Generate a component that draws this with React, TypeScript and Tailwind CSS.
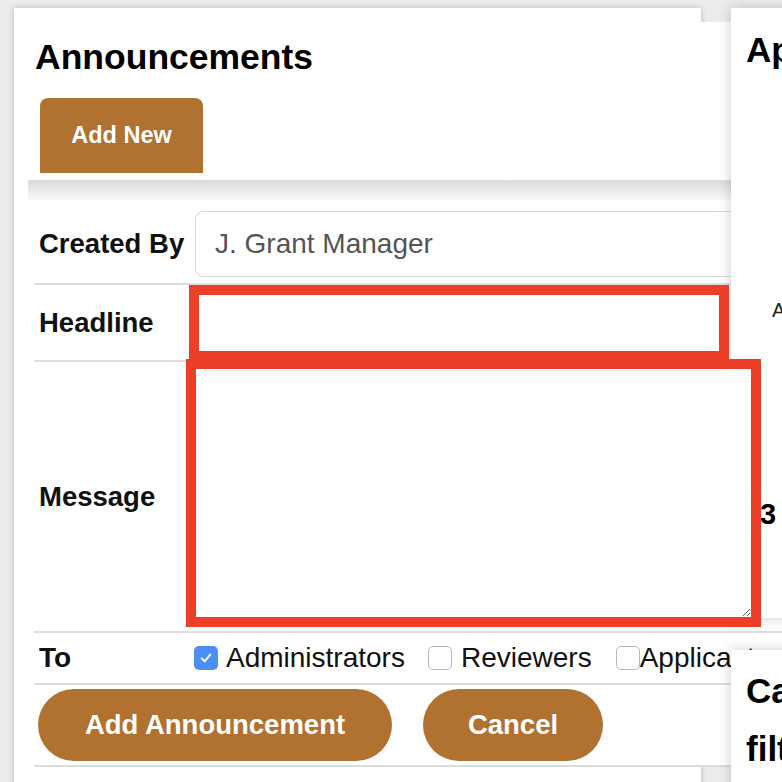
import React from "react";

const Checkbox: React.FC<{ checked?: boolean }> = ({ checked }) =>
  checked ? (
    <span className="flex h-6 w-6 shrink-0 items-center justify-center rounded-[5px] bg-[#4b8ef5]">
      <svg width="16" height="16" viewBox="0 0 24 24" fill="none">
        <path
          d="M5.5 12.5l4.5 4.5L18.5 7"
          stroke="white"
          strokeWidth="3"
          strokeLinecap="round"
          strokeLinejoin="round"
        />
      </svg>
    </span>
  ) : (
    <span className="h-6 w-6 shrink-0 rounded-[5px] border-[1.5px] border-[#b9b9b9] bg-white" />
  );

export default function App() {
  return (
    <div className="flex h-screen w-screen items-start overflow-hidden bg-[#ececec] pl-[14px] pt-[8px] font-['Liberation_Sans',Arial,sans-serif] text-[27.5px] text-[#111]">
      {/* Announcements card */}
      <div className="h-[800px] w-[687px] shrink-0 bg-white pt-[14px] shadow-[0_0_6px_rgba(0,0,0,0.22)]">
        <div className="w-[780px] bg-white pt-[15px]">
          <h2 className="pl-[21px] text-[35.5px] font-bold leading-[40px] text-black">
            Announcements
          </h2>

          <div className="ml-[26px] mt-[21px] flex h-[75px] w-[163px] items-center justify-center rounded-t-[8px] bg-[#b07131] text-[23.5px] font-bold text-white">
            Add New
          </div>

          {/* Form panel */}
          <div className="ml-[14px] mt-[7px]">
            <div className="h-[20px] bg-gradient-to-b from-[#dadada] to-[#fafafa]" />
            <div className="mt-[5px] pl-[6px]">
              {/* Created By */}
              <div className="flex h-[80px] items-center border-b-2 border-[#dddddd]">
                <div className="w-[161px] pl-[5px] font-bold">Created By</div>
                <div className="flex h-[66px] w-[580px] items-center rounded-[8px] border border-[#d9d9d9] pl-[19px] text-[28px] text-[#555]">
                  J. Grant Manager
                </div>
              </div>

              {/* Headline */}
              <div className="flex h-[77px] items-center border-b-2 border-[#dddddd]">
                <div className="w-[165px] pl-[5px] font-bold">Headline</div>
                <input
                  className="relative z-20 h-[56px] w-[520px] border-0 bg-white outline-[10px] outline-solid outline-[#eb4027]"
                  aria-label="Headline"
                />
              </div>

              {/* Message */}
              <div className="flex h-[271px] items-center border-b-2 border-[#dddddd]">
                <div className="w-[162px] pl-[5px] font-bold">Message</div>
                <textarea
                  className="relative z-20 -mt-[7px] h-[248px] w-[555px] border-0 bg-white outline-[10px] outline-solid outline-[#eb4027]"
                  aria-label="Message"
                />
              </div>

              {/* To */}
              <div className="flex h-[52px] items-center border-b-2 border-[#dddddd] text-[28px]">
                <div className="w-[160px] pl-[5px] font-bold">To</div>
                <Checkbox checked />
                <span className="ml-[8px] mr-[23px]">Administrators</span>
                <Checkbox />
                <span className="ml-[9px] mr-[24px]">Reviewers</span>
                <Checkbox />
                <span>Applicants</span>
              </div>

              {/* Actions */}
              <div className="flex h-[82px] items-center gap-[31px] border-b-2 border-[#dddddd] pl-[4px]">
                <button className="h-[72px] w-[354px] rounded-full bg-[#b07131] font-bold text-white">
                  Add Announcement
                </button>
                <button className="h-[72px] w-[180px] rounded-full bg-[#b07131] font-bold text-white">
                  Cancel
                </button>
              </div>
            </div>
          </div>
        </div>
      </div>

      {/* Right column */}
      <div className="relative z-10 ml-[30px] w-[320px] shrink-0">
        <div className="h-[610px] bg-white pl-[15px] pt-[22px] shadow-[0_0_12px_rgba(0,0,0,0.2)]">
          <h2 className="whitespace-nowrap text-[35px] font-bold leading-[40px] text-black">
            Applications
          </h2>
          <div className="mt-[228px] pl-[26px] text-[20px] leading-[24px] text-[#222]">
            Awaiting review
          </div>
          <div className="mt-[175px] pl-[14px] text-[29px] font-bold leading-[34px] text-black">
            3
          </div>
        </div>
        <div className="mt-[32px] h-[300px] bg-white pl-[15px] pt-[12px] shadow-[0_0_12px_rgba(0,0,0,0.2)]">
          <h2 className="text-[35px] font-bold leading-[58px] text-black">
            Candidate
            <br />
            filters
          </h2>
        </div>
      </div>
    </div>
  );
}
